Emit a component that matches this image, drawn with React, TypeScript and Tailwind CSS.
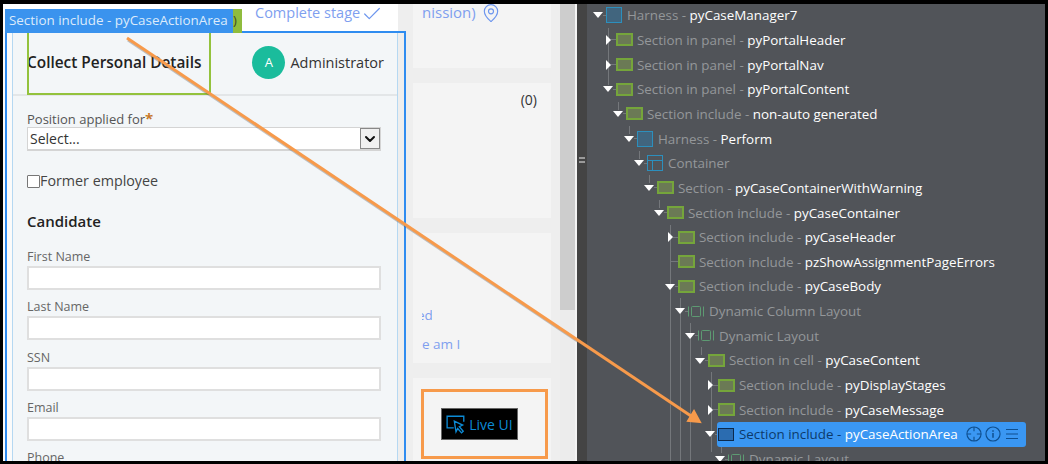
import { Check, ChevronDown, MapPin } from "lucide-react";

type kind = "section" | "harness" | "container" | "dynamic";
type row = {
  x: number;
  caret?: "down" | "right";
  kind: kind;
  label: string;
  name?: string;
  selected?: boolean;
};

// x is where the icon starts, measured from the left of the tree panel
const rows: row[] = [
  { x: 19, caret: "down", kind: "harness", label: "Harness", name: "pyCaseManager7" },
  { x: 29, caret: "right", kind: "section", label: "Section in panel", name: "pyPortalHeader" },
  { x: 29, caret: "right", kind: "section", label: "Section in panel", name: "pyPortalNav" },
  { x: 29, caret: "down", kind: "section", label: "Section in panel", name: "pyPortalContent" },
  { x: 39, caret: "down", kind: "section", label: "Section include", name: "non-auto generated" },
  { x: 50, caret: "down", kind: "harness", label: "Harness", name: "Perform" },
  { x: 60, caret: "down", kind: "container", label: "Container" },
  { x: 70, caret: "down", kind: "section", label: "Section", name: "pyCaseContainerWithWarning" },
  { x: 80, caret: "down", kind: "section", label: "Section include", name: "pyCaseContainer" },
  { x: 91, caret: "right", kind: "section", label: "Section include", name: "pyCaseHeader" },
  { x: 91, kind: "section", label: "Section include", name: "pzShowAssignmentPageErrors" },
  { x: 91, caret: "down", kind: "section", label: "Section include", name: "pyCaseBody" },
  { x: 101, caret: "down", kind: "dynamic", label: "Dynamic Column Layout" },
  { x: 111, caret: "down", kind: "dynamic", label: "Dynamic Layout" },
  { x: 121, caret: "down", kind: "section", label: "Section in cell", name: "pyCaseContent" },
  { x: 131, caret: "right", kind: "section", label: "Section include", name: "pyDisplayStages" },
  { x: 131, caret: "right", kind: "section", label: "Section include", name: "pyCaseMessage" },
  { x: 131, caret: "down", kind: "section", label: "Section include", name: "pyCaseActionArea", selected: true },
  { x: 141, caret: "down", kind: "dynamic", label: "Dynamic Layout" },
];

// vertical guide lines of the tree, left/top/height inside the tree panel
const guides = [
  { left: 21, top: 24, height: 57 },
  { left: 31, top: 98, height: 8 },
  { left: 42, top: 122, height: 8 },
  { left: 52, top: 147, height: 8 },
  { left: 62, top: 171, height: 8 },
  { left: 72, top: 196, height: 8 },
  { left: 83, top: 221, height: 236 },
  { left: 93, top: 294, height: 163 },
  { left: 103, top: 319, height: 138 },
  { left: 114, top: 343, height: 8 },
  { left: 124, top: 368, height: 80 },
  { left: 134, top: 441, height: 8 },
];

const fields = ["First Name", "Last Name", "SSN", "Email"];

const NodeIcon = ({ kind, selected }: { kind: kind; selected?: boolean }) => {
  if (selected) {
    return <span className="w-[16px] h-[13px] shrink-0 bg-[#2b6cb0] border border-[#0c2a4d]" />;
  }
  if (kind === "section") {
    return <span className="w-[17px] h-[13px] shrink-0 bg-[#6b7a55] border-2 border-[#75a53b]" />;
  }
  if (kind === "harness") {
    return <span className="w-[16px] h-[16px] shrink-0 bg-[#41657e] border border-[#2c8fbd]" />;
  }
  if (kind === "container") {
    return (
      <svg width="16" height="16" viewBox="0 0 16 16" className="shrink-0" fill="none" stroke="#2c8fbd">
        <rect x="0.5" y="0.5" width="15" height="15" />
        <path d="M0.5 5.5H15.5M5.5 5.5V15.5" />
      </svg>
    );
  }
  return (
    <svg width="16" height="13" viewBox="0 0 16 13" className="shrink-0" fill="none" stroke="#5d9a72">
      <path d="M0.5 1.5V11.5M15.5 1.5V11.5" />
      <rect x="3.5" y="1.5" width="9" height="10" rx="1" />
    </svg>
  );
};

const TreeCaret = ({ caret }: { caret?: "down" | "right" }) => (
  <span className="w-[14px] shrink-0 flex items-center justify-end">
    {caret === "down" && (
      <span className="w-0 h-0 border-x-[5px] border-x-transparent border-t-[6px] border-t-white" />
    )}
    {caret === "right" && (
      <span className="w-0 h-0 border-y-[5px] border-y-transparent border-l-[5px] border-l-white" />
    )}
    <span className={`h-px bg-[#74777b] ${caret === "down" ? "w-[3px]" : caret === "right" ? "w-[5px]" : "w-[8px]"}`} />
  </span>
);

const TreeRow = ({ item }: { item: row }) => {
  const content = (
    <>
      <NodeIcon kind={item.kind} selected={item.selected} />
      <span className={`whitespace-nowrap ${item.kind === "section" && !item.selected ? "ml-[4px]" : "ml-[5px]"}`}>
        <span className={item.selected ? "text-[#0d3a6b]" : "text-[#94979a]"}>
          {item.label}
          {item.name ? " - " : ""}
        </span>
        {item.name && <span className="text-white">{item.name}</span>}
      </span>
    </>
  );
  return (
    <div className="h-[24.67px] flex items-center" style={{ marginLeft: item.x - 14 }}>
      <TreeCaret caret={item.caret} />
      {item.selected ? (
        <div className="w-[309px] h-[25px] -ml-[1px] pl-[1px] pr-[8px] flex items-center bg-[#3a97f3] rounded-[3px]">
          {content}
          <span className="ml-auto flex items-center">
            <svg width="16" height="16" viewBox="0 0 17 17" fill="none" stroke="#0f4f8f" strokeWidth="1.2">
              <circle cx="8.5" cy="8.5" r="7.5" />
              <path d="M8.5 1V5.5M8.5 11.5V16M1 8.5H5.5M11.5 8.5H16" />
            </svg>
            <svg width="16" height="16" viewBox="0 0 17 17" fill="none" stroke="#0f4f8f" strokeWidth="1.2" className="ml-[3px]">
              <circle cx="8.5" cy="8.5" r="7.5" />
              <path d="M8.5 7.5V12.5" strokeWidth="1.6" />
              <path d="M8.5 4.5V6" strokeWidth="1.6" />
            </svg>
            <svg width="12" height="12" viewBox="0 0 12 12" fill="none" stroke="#0f4f8f" strokeWidth="1.2" className="ml-[5px]">
              <path d="M0 1.5H12M0 6H12M0 10.5H12" />
            </svg>
          </span>
        </div>
      ) : (
        content
      )}
    </div>
  );
};

const Card = ({ className, children }: { className: string; children?: React.ReactNode }) => (
  <div className={`bg-[#f4f4f4] w-[138px] shrink-0 ${className}`}>{children}</div>
);

export default function App() {
  return (
    <div className="relative w-[1048px] h-[464px] overflow-hidden bg-black pt-[4px] pl-[3px] pr-[3px] pb-[3px] font-['Open_Sans',sans-serif] text-[13.4px]">
      <div className="flex h-full bg-[#eeeeee]">
        {/* case form */}
        <div className="w-[395px] shrink-0 flex flex-col bg-[#fbfbfb] overflow-hidden">
          <div className="h-[27px] shrink-0 bg-white pl-[252px] text-[#7f9fef] text-[14.5px] leading-[17px] flex items-start">
            <span>Complete stage</span>
            <Check size={22} strokeWidth={1.3} className="-mt-[1px] ml-[1px] text-[#6d96ee]" />
          </div>
          <div className="ml-[9px] flex-1 bg-[#f3f6f8] border-x border-[#b5d8f2] overflow-hidden text-[#333]">
            <div className="h-[65px] border-b-2 border-[#e3e6e8] pl-[14px] pr-[13px] flex items-center">
              <h2 className="font-semibold text-[15.4px] text-[#222] mt-[1px]">Collect Personal Details</h2>
              <span className="ml-auto w-[33px] h-[33px] rounded-full bg-[#1abc9c] text-white text-[13px] flex items-center justify-center">
                A
              </span>
              <span className="ml-[5px] text-[14.5px] text-[#333]">Administrator</span>
            </div>
            <div className="pl-[14px] w-[368px]">
              <div className="mt-[14px] h-[17px] leading-[17px] text-[13px] text-[#555]">
                Position applied for<span className="text-[#c8792a] text-[15px] font-bold">*</span>
              </div>
              <div className="h-[24px] bg-white border border-[#d4d4d4] border-b-2 flex items-center pl-[2px] text-[#333] text-[14px]">
                Select...
                <span className="ml-auto w-[20px] h-full bg-[#f0f0f0] border border-[#888] flex items-center justify-center">
                  <ChevronDown size={16} strokeWidth={3} className="text-[#111]" />
                </span>
              </div>
              <label className="mt-[20px] h-[20px] flex items-center text-[14.3px] text-[#444]">
                <span className="w-[13px] h-[13px] bg-white border border-[#777] rounded-[1px]" />
                Former employee
              </label>
              <h3 className="mt-[19px] h-[22px] leading-[22px] font-semibold text-[15px] text-[#222]">Candidate</h3>
              <div className="mt-[16px] flex flex-col gap-[8.3px]">
                {fields.map((f) => (
                  <div key={f}>
                    <div className="h-[18px] leading-[18px] text-[12.5px] text-[#666]">{f}</div>
                    <input className="block w-full h-[24px] bg-white border-2 border-[#dfdfdf]" />
                  </div>
                ))}
                <div className="h-[18px] leading-[18px] text-[12.5px] text-[#666]">Phone</div>
              </div>
            </div>
          </div>
        </div>

        {/* right side cards */}
        <div className="ml-[15px] flex flex-col gap-[15px] text-[#7f9fef]">
          <Card className="h-[64px] pl-[9px] flex items-start">
            <span className="text-[15px] leading-[17px]">nission)</span>
            <MapPin size={20} strokeWidth={1.4} className="ml-[5px] -mt-[1px] text-[#6d96ee]" />
          </Card>
          <Card className="h-[135px] pt-[6px] pr-[14px] text-right text-[14px] text-[#333]">(0)</Card>
          <Card className="h-[130px] pl-[9px] pt-[73px] text-[13.5px] leading-[19px]">
            <div className="w-[10px] overflow-hidden">
              <div className="-ml-[5px]">ed</div>
            </div>
            <div className="mt-[10px]">e am I</div>
          </Card>
          <Card className="flex-1 pt-[11px] pl-[8px]">
            <div className="w-[127px] h-[70px] border-[3px] border-[#f79a4b] pl-[17px] flex items-center">
              <div className="w-[77px] h-[32px] bg-black border border-[#666] flex items-center justify-center gap-[3px] text-[#0c8bd6] text-[14px]">
                <svg width="20" height="20" viewBox="0 0 18 18" fill="none" stroke="#0c8bd6" strokeWidth="1.2">
                  <path d="M7 12.5H1V2H16V7" />
                  <path d="M7.5 6.5L15 10L12 11.5L15.5 15.5L14 17L10.5 13L9 16Z" />
                </svg>
                Live UI
              </div>
            </div>
          </Card>
        </div>

        {/* scrollbar */}
        <div className="ml-[9px] w-[15px] shrink-0 bg-[#ececec]">
          <div className="h-[306px] bg-[#cdcdcd]" />
        </div>
        <div className="w-[2px] shrink-0 bg-[#f4f4f4]" />

        {/* splitter */}
        <div className="w-[10px] shrink-0 bg-[#444444] flex flex-col items-center justify-center gap-[2px] pb-[146px]">
          <span className="w-[6px] h-[2px] bg-[#9a9a9a]" />
          <span className="w-[6px] h-[2px] bg-[#9a9a9a]" />
        </div>

        {/* live ui tree */}
        <div className="relative flex-1 bg-[#515459] overflow-hidden">
          {guides.map((g, i) => (
            <span key={i} className="absolute w-px bg-[#74777b]" style={g} />
          ))}
          <div className="relative -mt-[1px]">
            {rows.map((r, i) => (
              <TreeRow key={i} item={r} />
            ))}
          </div>
        </div>
      </div>

      {/* highlight of the selected section, lies over the form */}
      <div className="absolute left-[5px] top-[31px] w-[401px] h-[430px] border-2 border-b-0 border-[#2f8cf0]" />
      <div className="absolute left-[27px] top-[30px] w-[184px] h-[65px] border-2 border-[#93c23d]" />
      <div className="absolute left-[225px] top-[9px] w-[17px] h-[24px] bg-[#8fbc3d] pl-[8px] text-[#3d4a22] text-[13px] leading-[23px]">
        )
      </div>
      <div className="absolute left-[5px] top-[9px] w-[228px] h-[24px] bg-[#3a93ee] pl-[4px] text-[#dcebfb] text-[13.4px] leading-[23px] whitespace-nowrap">
        Section include - pyCaseActionArea
      </div>

      {/* annotation arrow */}
      <svg className="absolute inset-0" width="1048" height="464" fill="none">
        <path d="M128 40L697 421" stroke="#555" strokeOpacity="0.35" strokeWidth="3" />
        <path d="M127 38L694 418" stroke="#f79a4b" strokeWidth="3" />
        <path d="M700 422L688 421L694 411Z" fill="#f79a4b" stroke="#f79a4b" strokeWidth="2" />
      </svg>
    </div>
  );
}
